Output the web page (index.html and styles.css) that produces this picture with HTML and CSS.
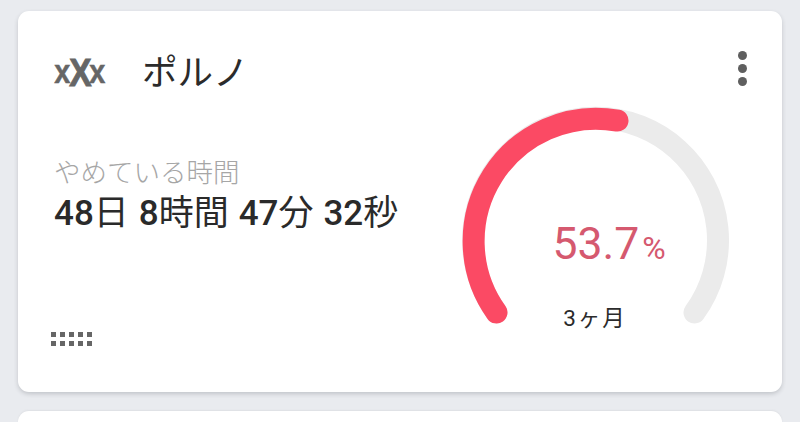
FILE: index.html
```html
<!DOCTYPE html>
<html lang="ja">
<head>
<meta charset="utf-8">
<title>ポルノ</title>
<link rel="stylesheet" href="styles.css">
</head>
<body>
<main class="list">
  <section class="card">
    <div class="info">
      <header class="head">
        <div class="logo"><span class="logo-s">x</span><span class="logo-l">X</span><span class="logo-s">x</span></div>
        <h1 class="title">ポルノ</h1>
      </header>
      <div class="stat">
        <div class="label">やめている時間</div>
        <div class="value"><b>48</b>日 <b>8</b>時間 <b>47</b>分 <b>32</b>秒</div>
      </div>
      <div class="dots">
        <i></i><i></i><i></i><i></i><i></i>
        <i></i><i></i><i></i><i></i><i></i>
      </div>
    </div>
    <div class="gauge">
      <svg class="ring" width="268" height="220" viewBox="0 0 268 220" aria-hidden="true">
        <path class="track" d="M35.5 204.5 A122.5 122.5 0 1 1 233.5 204.5"/>
        <path class="fill" d="M35.5 204.5 A122.5 122.5 0 0 1 156.5 12.6"/>
      </svg>
      <div class="pct">53.7<span class="pct-sign">%</span></div>
      <div class="goal">3ヶ月</div>
    </div>
    <div class="more"><i></i><i></i><i></i></div>
  </section>
  <section class="card next"></section>
</main>
</body>
</html>
```
FILE: styles.css
```css
* { box-sizing: border-box; }
html, body { margin: 0; height: 100%; overflow: hidden; }
body {
  background: #e9ebef;
  font-family: Roboto, "Noto Sans CJK JP", sans-serif;
  color: #2b2b2b;
}
.list {
  height: 422px;
  overflow: hidden;
  padding: 11px 18px 0;
  display: flex;
  flex-direction: column;
  gap: 19px;
}
.card {
  position: relative;
  background: #fff;
  border-radius: 11px;
  box-shadow: 0 2px 4px rgba(60, 64, 72, .22);
  height: 381px;
  flex: none;
  display: flex;
  padding: 0 33px;
}
.card.next { height: 40px; box-shadow: 0 -1px 2px rgba(60, 64, 72, .06); }
.info { flex: 1; min-width: 0; display: flex; flex-direction: column; }
.head { display: flex; align-items: center; height: 60px; margin-top: 32px; }
.logo {
  width: 94px;
  margin-left: 2px;
  display: flex;
  align-items: center;
  font-family: "Liberation Sans", sans-serif;
  font-weight: 700;
  color: #666;
  line-height: 1;
}
.logo-s {
  display: block;
  width: 15px;
  text-align: center;
  font-size: 34px;
  margin-top: -5px;
  transform: scaleX(.85);
  -webkit-text-stroke: .5px #666;
}
.logo-l {
  display: block;
  width: 20px;
  text-align: center;
  font-size: 38px;
  margin-top: -1px;
  transform: scaleX(.88);
  -webkit-text-stroke: 1px #666;
}
.title { margin: 0 0 0 -5px; font-size: 35.5px; font-weight: 400; line-height: 60px; color: #2b2b2b; }
.stat { margin-top: 52px; margin-left: 3px; }
.label { font-size: 26.5px; line-height: 35px; color: #a6a6a6; font-weight: 300; }
.value { font-size: 35px; line-height: 48px; font-weight: 400; color: #2a2a2a; white-space: nowrap; word-spacing: 1.3px; }
.value b { font-weight: 500; }
.dots {
  margin-top: 94px;
  display: grid;
  grid-template-columns: repeat(5, 4.5px);
  grid-auto-rows: 4.5px;
  gap: 4.5px;
}
.dots i { background: #666; }
.gauge { position: relative; width: 268px; flex: none; margin: 97px 20px 0 0; }
.ring { display: block; overflow: visible; }
.track, .fill { fill: none; stroke-width: 22; stroke-linecap: round; }
.track { stroke: #ebebeb; }
.fill { stroke: #fb4a64; }
.pct {
  position: absolute; left: 0; right: 0; top: 106px;
  text-align: center;
  font-size: 44.5px; line-height: 60px; color: #d5596f;
  padding-left: 28px;
  white-space: nowrap;
}
.pct-sign { font-size: 32px; margin-left: 3px; }
.goal {
  position: absolute; left: 0; right: 0; top: 196px;
  text-align: center; font-size: 22.5px; line-height: 28px; color: #2b2b2b; letter-spacing: 2px;
}
.more {
  position: absolute; top: 40px; right: 35px;
  display: flex; flex-direction: column; gap: 4px;
}
.more i { width: 9px; height: 9px; border-radius: 50%; background: #5f5f5f; }
```
